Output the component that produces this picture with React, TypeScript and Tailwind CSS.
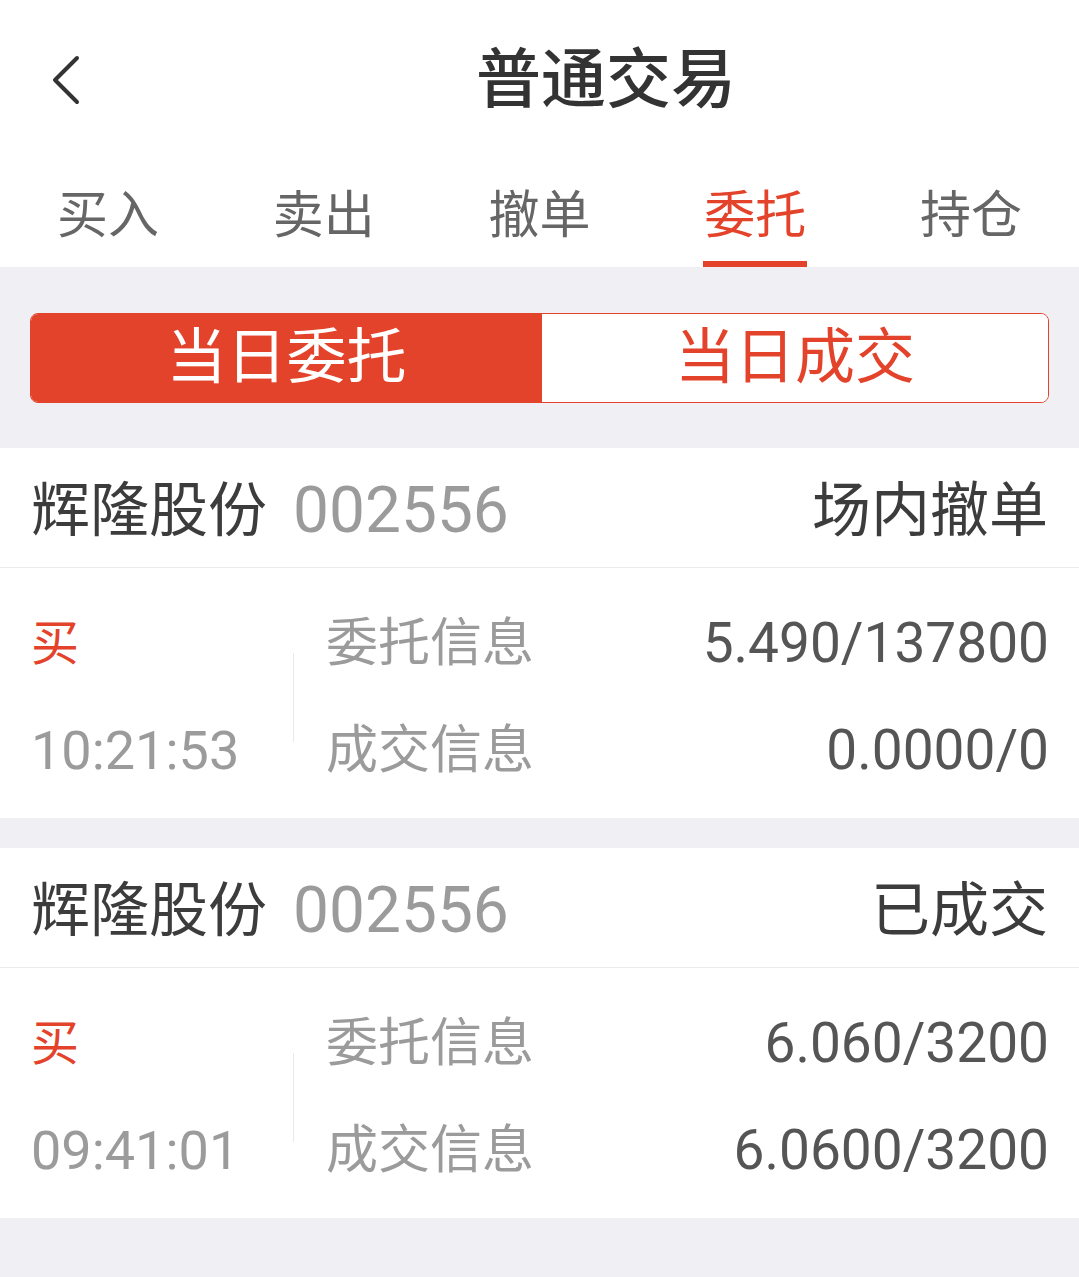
import React from "react";

const RED = "#e4432b";

function Chevron() {
  return (
    <svg width="40" height="56" viewBox="0 0 40 56" fill="none">
      <path d="M29 6 L7 28 L29 50" stroke="#333333" strokeWidth="4" strokeLinecap="round" strokeLinejoin="round" />
    </svg>
  );
}

type Order = {
  name: string;
  code: string;
  status: string;
  side: string;
  time: string;
  entrust: string;
  deal: string;
};

const orders: Order[] = [
  { name: "辉隆股份", code: "002556", status: "场内撤单", side: "买", time: "10:21:53", entrust: "5.490/137800", deal: "0.0000/0" },
  { name: "辉隆股份", code: "002556", status: "已成交", side: "买", time: "09:41:01", entrust: "6.060/3200", deal: "6.0600/3200" },
];

function OrderCard({ o }: { o: Order }) {
  return (
    <div className="bg-white">
      <div className="h-[120px] border-b border-[#ebebeb] flex items-center justify-between pl-[31px] pr-[31px] pt-[6px]">
        <div className="flex items-center">
          <span className="text-[59px] leading-none text-[#3c3c3c]">{o.name}</span>
          <span className="text-[64px] leading-none text-[#9b9b9b] ml-[26px]">{o.code}</span>
        </div>
        <span className="text-[59px] leading-none text-[#3c3c3c]">{o.status}</span>
      </div>
      <div className="flex pt-[22px] pb-[14px] pl-[31px] pr-[30px]">
        <div className="w-[262px] flex flex-col">
          <div className="h-[107px] flex items-center">
            <span className="text-[48px] leading-none" style={{ color: RED }}>{o.side}</span>
          </div>
          <div className="h-[107px] flex items-center">
            <span className="text-[54px] leading-none text-[#9b9b9b]">{o.time}</span>
          </div>
        </div>
        <div className="w-px h-[89px] bg-[#e8e8e8] self-center" />
        <div className="flex-1 pl-[32px] flex flex-col">
          <div className="h-[107px] flex items-center justify-between">
            <span className="text-[52px] leading-none text-[#9b9b9b]">委托信息</span>
            <span className="text-[55px] leading-none text-[#555555]">{o.entrust}</span>
          </div>
          <div className="h-[107px] flex items-center justify-between">
            <span className="text-[52px] leading-none text-[#9b9b9b]">成交信息</span>
            <span className="text-[55px] leading-none text-[#555555]">{o.deal}</span>
          </div>
        </div>
      </div>
    </div>
  );
}

export default function App() {
  const tabs = ["买入", "卖出", "撤单", "委托", "持仓"];
  return (
    <div
      className="w-[1079px] h-[1277px] bg-[#efeff4] overflow-hidden"
      style={{ fontFamily: 'Roboto, "Noto Sans CJK SC", sans-serif' }}
    >
      <div className="bg-white">
        <div className="h-[160px] flex items-center px-[48px]">
          <Chevron />
          <div className="flex-1 text-center pl-[93px]">
            <span className="text-[65px] leading-none font-medium text-[#333333]">普通交易</span>
          </div>
        </div>
        <div className="h-[107px] grid grid-cols-5">
          {tabs.map((t) => {
            const active = t === "委托";
            return (
              <div key={t} className="flex flex-col items-center pt-[30px]">
                <span
                  className={`text-[51px] leading-none ${active ? "text-[#e4432b]" : "text-[#666666]"}`}
                >
                  {t}
                </span>
                {active && <div className="mt-[20px] w-[104px] h-[6px] bg-[#e4432b]" />}
              </div>
            );
          })}
        </div>
      </div>

      <div className="pt-[46px] pb-[45px] px-[30px]">
        <div className="h-[90px] flex rounded-[8px] border border-[#e4432b] overflow-hidden">
          <div className="w-[511px] bg-[#e4432b] flex items-center justify-center">
            <span className="text-[60px] leading-none text-white">当日委托</span>
          </div>
          <div className="flex-1 bg-white flex items-center justify-center">
            <span className="text-[60px] leading-none text-[#e4432b]">当日成交</span>
          </div>
        </div>
      </div>

      <OrderCard o={orders[0]} />
      <div className="h-[30px]" />
      <OrderCard o={orders[1]} />
    </div>
  );
}
